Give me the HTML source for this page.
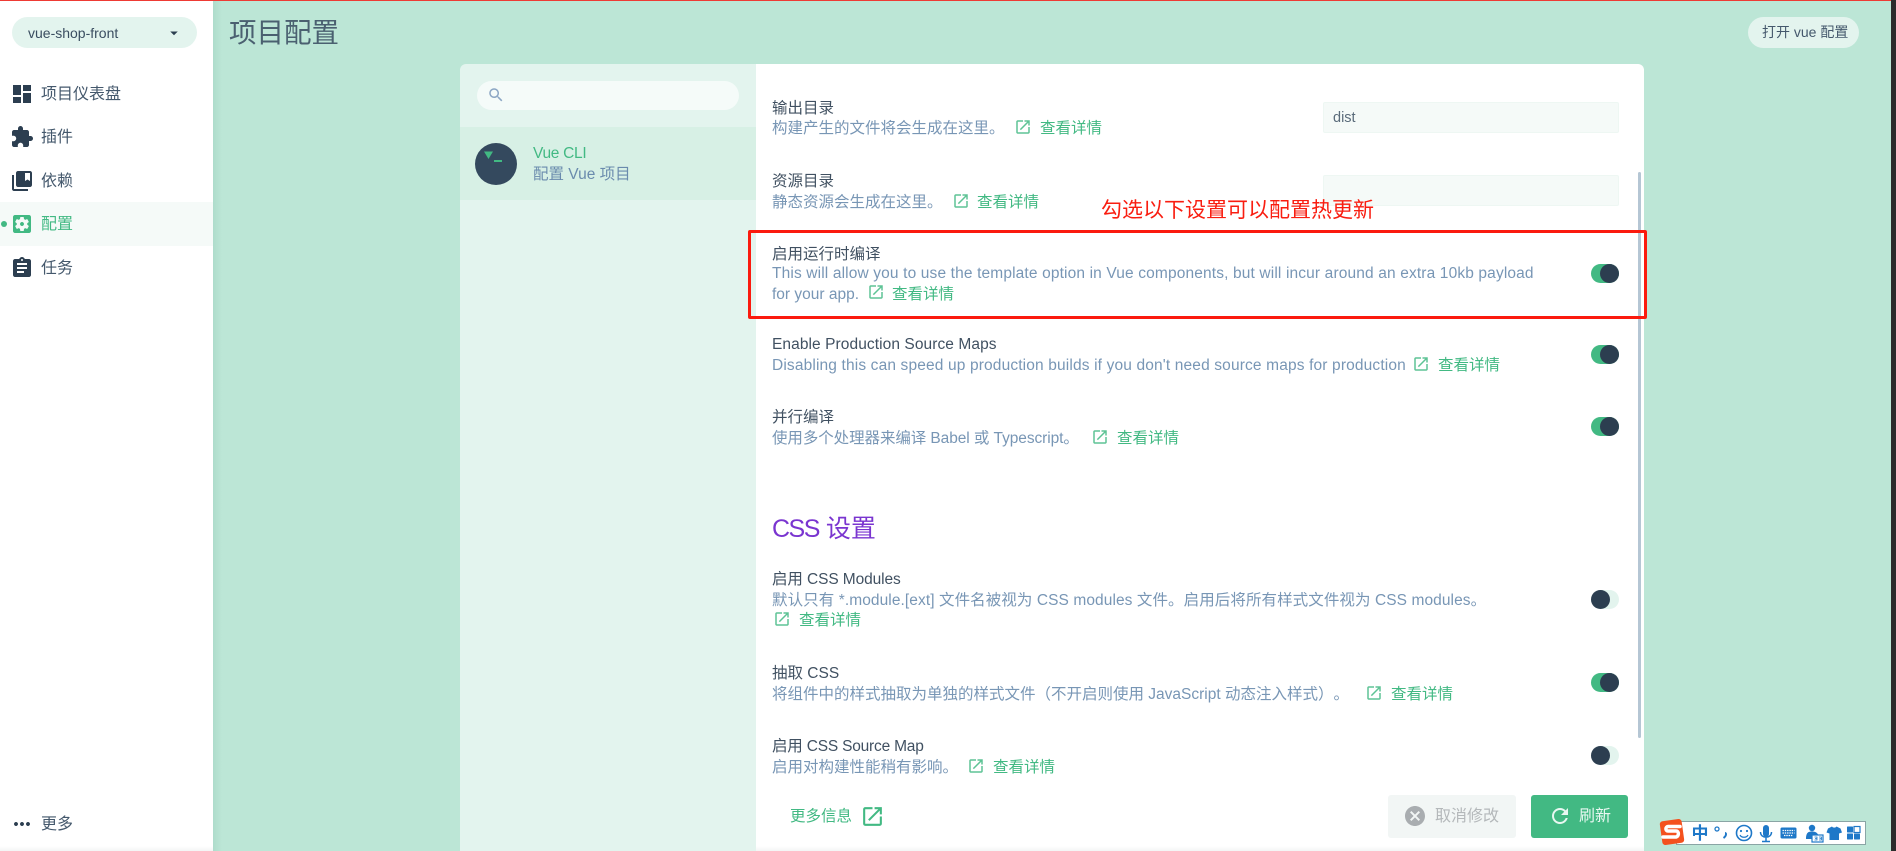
<!DOCTYPE html>
<html lang="zh-CN"><head><meta charset="utf-8"><title>项目配置</title>
<style>
*{box-sizing:border-box}
html,body{margin:0;padding:0;width:1896px;height:851px;overflow:hidden;background:#bce6d6;font-family:"Liberation Sans","Noto Sans CJK SC",sans-serif;font-size:16px;color:#2c3e50}
.a{position:absolute}
.t{position:absolute;white-space:nowrap;line-height:20px;height:20px;margin-top:1px;text-spacing-trim:space-all}
.ti{color:#2c3e50;opacity:.9;font-size:15.5px}
.d{color:#6a8bad;opacity:.9;font-size:15.5px}
.l{color:#42b983;font-size:15.5px}
svg{position:absolute;display:block}
.nav{fill:#2c3e50}
.lk{fill:#42b983;opacity:.85}
.tg{position:absolute;left:1591px;width:28px;height:19px;border-radius:10px;background:#42b983}
.tg i{position:absolute;right:0;top:0;width:19px;height:19px;border-radius:50%;background:#2c3e50}
.tg.off{background:#e3f4ee}
.tg.off i{right:auto;left:0}
.inp{position:absolute;left:1323px;width:296px;height:31px;background:#f5faf8;border:1px solid #eef7f3;border-radius:2px}
</style></head><body>
<div class="a" style="left:0;top:0;width:1896px;height:851px;background:#bce6d6"></div>
<div class="a" style="left:213px;top:0;width:9px;height:851px;background:linear-gradient(90deg,#aedccb,#bce6d6)"></div>

<!-- sidebar -->
<div class="a" style="left:0;top:0;width:213px;height:851px;background:#fff"></div>
<div class="a" style="left:12px;top:17px;width:185px;height:31px;border-radius:16px;background:#e3f4ee"></div>
<div class="t" style="left:28px;top:22px;font-size:14px;color:#3a4d60">vue-shop-front</div>
<svg style="left:165px;top:23.500px" width="18" height="18" viewBox="0 0 24 24" class="nav"><path d="M7 10l5 5 5-5z"/></svg>

<svg class="nav" style="left:10px;top:82px" width="24" height="24" viewBox="0 0 24 24"><path d="M3 13h8V3H3v10zm0 8h8v-6H3v6zm10 0h8V11h-8v10zm0-18v6h8V3h-8z"/></svg>
<div class="t" style="left:41px;top:84px;color:#44586c">项目仪表盘</div>
<svg class="nav" style="left:10px;top:125px" width="24" height="24" viewBox="0 0 24 24"><path d="M20.5 11H19V7c0-1.1-.9-2-2-2h-4V3.5C13 2.12 11.88 1 10.5 1S8 2.12 8 3.5V5H4c-1.1 0-1.99.9-1.99 2v3.8H3.5c1.49 0 2.7 1.21 2.7 2.7s-1.21 2.7-2.7 2.7H2V20c0 1.1.9 2 2 2h3.8v-1.5c0-1.49 1.21-2.7 2.7-2.7 1.49 0 2.7 1.21 2.7 2.7V22H17c1.1 0 2-.9 2-2v-4h1.5c1.38 0 2.5-1.12 2.5-2.5S21.88 11 20.5 11z"/></svg>
<div class="t" style="left:41px;top:127px;color:#44586c">插件</div>
<svg class="nav" style="left:10px;top:169px" width="24" height="24" viewBox="0 0 24 24"><path d="M4 6H2v14c0 1.1.9 2 2 2h14v-2H4V6z"/><path d="M20 2H8c-1.1 0-2 .9-2 2v12c0 1.1.9 2 2 2h12c1.1 0 2-.9 2-2V4c0-1.1-.9-2-2-2zm0 10l-2.5-1.5L15 12V4h5v8z"/></svg>
<div class="t" style="left:41px;top:171px;color:#44586c">依赖</div>
<div class="a" style="left:0;top:202px;width:213px;height:44px;background:#f5faf8"></div>
<div class="a" style="left:1px;top:221px;width:6px;height:6px;border-radius:50%;background:#42b983"></div>
<svg style="left:10px;top:212px;fill:#42b983" width="24" height="24" viewBox="0 0 24 24"><path d="M12 10c-1.1 0-2 .9-2 2s.9 2 2 2 2-.9 2-2-.9-2-2-2zm7-7H5c-1.11 0-2 .9-2 2v14c0 1.1.89 2 2 2h14c1.11 0 2-.9 2-2V5c0-1.1-.89-2-2-2zm-1.75 9c0 .23-.02.46-.05.68l1.48 1.16c.13.11.17.3.08.45l-1.4 2.42c-.09.15-.27.21-.43.15l-1.74-.7c-.36.28-.76.51-1.18.69l-.26 1.85c-.03.17-.18.3-.35.3h-2.8c-.17 0-.32-.13-.35-.29l-.26-1.85c-.43-.18-.82-.41-1.18-.69l-1.74.7c-.16.06-.34 0-.43-.15l-1.4-2.42c-.09-.15-.05-.34.08-.45l1.48-1.16c-.03-.23-.05-.46-.05-.69 0-.23.02-.46.05-.68l-1.48-1.16c-.13-.11-.17-.3-.08-.45l1.4-2.42c.09-.15.27-.21.43-.15l1.74.7c.36-.28.76-.51 1.18-.69l.26-1.85c.03-.17.18-.3.35-.3h2.8c.17 0 .32.13.35.29l.26 1.85c.43.18.82.41 1.18.69l1.74-.7c.16-.06.34 0 .43.15l1.4 2.42c.09.15.05.34-.08.45l-1.48 1.16c.03.23.05.46.05.69z"/></svg>
<div class="t" style="left:41px;top:214px;color:#42b983">配置</div>
<svg class="nav" style="left:10px;top:256px" width="24" height="24" viewBox="0 0 24 24"><path d="M19 3h-4.18C14.4 1.84 13.3 1 12 1c-1.3 0-2.4.84-2.82 2H5c-1.1 0-2 .9-2 2v14c0 1.1.9 2 2 2h14c1.1 0 2-.9 2-2V5c0-1.1-.9-2-2-2zm-7 0c.55 0 1 .45 1 1s-.45 1-1 1-1-.45-1-1 .45-1 1-1zm2 14H7v-2h7v2zm3-4H7v-2h10v2zm0-4H7V7h10v2z"/></svg>
<div class="t" style="left:41px;top:258px;color:#44586c">任务</div>
<svg class="nav" style="left:10px;top:812px" width="24" height="24" viewBox="0 0 24 24"><path d="M6 10c-1.1 0-2 .9-2 2s.9 2 2 2 2-.9 2-2-.9-2-2-2zm12 0c-1.1 0-2 .9-2 2s.9 2 2 2 2-.9 2-2-.9-2-2-2zm-6 0c-1.1 0-2 .9-2 2s.9 2 2 2 2-.9 2-2-.9-2-2-2z"/></svg>
<div class="t" style="left:41px;top:814px;color:#44586c">更多</div>
<div class="a" style="left:0;top:846px;width:213px;height:5px;background:linear-gradient(#fff,#f3f5f5)"></div>

<!-- header -->
<div class="t" style="left:229px;top:14px;height:36px;line-height:36px;font-size:27.5px;color:#4a6070">项目配置</div>
<div class="a" style="left:1748px;top:17px;width:111px;height:31px;border-radius:16px;background:#e3f4ee"></div>
<div class="t" style="left:1762px;top:21px;font-size:14px;color:#44586c">打开 vue 配置</div>

<!-- panel left -->
<div class="a" style="left:460px;top:64px;width:296px;height:787px;background:#e3f4ee;border-radius:6px 0 0 0"></div>
<div class="a" style="left:477px;top:81px;width:262px;height:29px;border-radius:15px;background:#f5fbf9"></div>
<svg style="left:487px;top:86px;fill:#8ca6c4" width="18" height="18" viewBox="0 0 24 24"><path d="M15.5 14h-.79l-.28-.27C15.41 12.59 16 11.11 16 9.5 16 5.91 13.09 3 9.5 3S3 5.91 3 9.5 5.91 16 9.5 16c1.61 0 3.09-.59 4.23-1.57l.27.28v.79l5 4.99L20.49 19l-4.99-5zm-6 0C7.01 14 5 11.99 5 9.5S7.01 5 9.5 5 14 7.01 14 9.5 11.99 14 9.5 14z"/></svg>
<div class="a" style="left:460px;top:127px;width:296px;height:73px;background:#d7f0e5"></div>
<div class="a" style="left:475px;top:143px;width:42px;height:42px;border-radius:50%;background:#34495e"></div>
<svg style="left:475px;top:143px" width="42" height="42" viewBox="0 0 42 42"><path d="M9 8.500h9l-4.500 7.500z" fill="#42b983"/><rect x="19" y="17" width="8" height="2" fill="#42b983"/></svg>
<div class="t" style="left:533px;top:143px;color:#42b983;font-size:15.5px;letter-spacing:-.3px">Vue CLI</div>
<div class="t" style="left:533px;top:164px;color:#6a8bad;font-size:15.5px">配置 Vue 项目</div>

<!-- panel right -->
<div class="a" style="left:756px;top:64px;width:888px;height:787px;background:#fff;border-radius:0 6px 0 0"></div>
<div class="a" style="left:756px;top:846px;width:888px;height:5px;background:linear-gradient(#fff,#f3f5f5)"></div>

<div class="t ti" style="left:772px;top:98px">输出目录</div>
<div class="t d" style="left:772px;top:118px">构建产生的文件将会生成在这里。</div>
<svg class="lk" style="left:1014px;top:118px" width="18" height="18" viewBox="0 0 24 24"><path d="M19 19H5V5h7V3H5c-1.11 0-2 .9-2 2v14c0 1.1.89 2 2 2h14c1.1 0 2-.9 2-2v-7h-2v7zM14 3v2h3.59l-9.830 9.830 1.410 1.410L19 6.410V10h2V3h-7z"/></svg>
<div class="t l" style="left:1040px;top:118px">查看详情</div>
<div class="inp" style="top:102px"></div>
<div class="t" style="left:1333px;top:107px;font-size:14.500px;color:#5a6b7a">dist</div>

<div class="t ti" style="left:772px;top:171px">资源目录</div>
<div class="t d" style="left:772px;top:192px">静态资源会生成在这里。</div>
<svg class="lk" style="left:952px;top:192px" width="18" height="18" viewBox="0 0 24 24"><path d="M19 19H5V5h7V3H5c-1.11 0-2 .9-2 2v14c0 1.1.89 2 2 2h14c1.1 0 2-.9 2-2v-7h-2v7zM14 3v2h3.59l-9.830 9.830 1.410 1.410L19 6.410V10h2V3h-7z"/></svg>
<div class="t l" style="left:977px;top:192px">查看详情</div>
<div class="inp" style="top:175px"></div>

<div class="t ti" style="left:772px;top:244px">启用运行时编译</div>
<div class="t d" style="left:772px;top:263px;letter-spacing:.14px">This will allow you to use the template option in Vue components, but will incur around an extra 10kb payload</div>
<div class="t d" style="left:772px;top:284px">for your app.</div>
<svg class="lk" style="left:867px;top:283px" width="18" height="18" viewBox="0 0 24 24"><path d="M19 19H5V5h7V3H5c-1.11 0-2 .9-2 2v14c0 1.1.89 2 2 2h14c1.1 0 2-.9 2-2v-7h-2v7zM14 3v2h3.59l-9.830 9.830 1.410 1.410L19 6.410V10h2V3h-7z"/></svg>
<div class="t l" style="left:892px;top:284px">查看详情</div>
<div class="tg" style="top:264px"><i></i></div>

<div class="t ti" style="left:772px;top:334px;letter-spacing:.08px">Enable Production Source Maps</div>
<div class="t d" style="left:772px;top:355px;letter-spacing:.146px">Disabling this can speed up production builds if you don't need source maps for production</div>
<svg class="lk" style="left:1412px;top:355px" width="18" height="18" viewBox="0 0 24 24"><path d="M19 19H5V5h7V3H5c-1.11 0-2 .9-2 2v14c0 1.1.89 2 2 2h14c1.1 0 2-.9 2-2v-7h-2v7zM14 3v2h3.59l-9.830 9.830 1.410 1.410L19 6.410V10h2V3h-7z"/></svg>
<div class="t l" style="left:1438px;top:355px">查看详情</div>
<div class="tg" style="top:345px"><i></i></div>

<div class="t ti" style="left:772px;top:407px">并行编译</div>
<div class="t d" style="left:772px;top:428px;letter-spacing:-.08px">使用多个处理器来编译 Babel 或 Typescript。</div>
<svg class="lk" style="left:1091px;top:428px" width="18" height="18" viewBox="0 0 24 24"><path d="M19 19H5V5h7V3H5c-1.11 0-2 .9-2 2v14c0 1.1.89 2 2 2h14c1.1 0 2-.9 2-2v-7h-2v7zM14 3v2h3.59l-9.830 9.830 1.410 1.410L19 6.410V10h2V3h-7z"/></svg>
<div class="t l" style="left:1117px;top:428px">查看详情</div>
<div class="tg" style="top:417px"><i></i></div>

<div class="t" style="left:772px;top:510px;height:36px;line-height:36px;font-size:25px;color:#7a35d0"><span style="letter-spacing:-1.5px">CSS</span> 设置</div>

<div class="t ti" style="left:772px;top:569px;letter-spacing:-.1px">启用 CSS Modules</div>
<div class="t d" style="left:772px;top:590px;letter-spacing:.08px">默认只有 *.module.[ext] 文件名被视为 CSS modules 文件。启用后将所有样式文件视为 CSS modules。</div>
<svg class="lk" style="left:773px;top:610px" width="18" height="18" viewBox="0 0 24 24"><path d="M19 19H5V5h7V3H5c-1.11 0-2 .9-2 2v14c0 1.1.89 2 2 2h14c1.1 0 2-.9 2-2v-7h-2v7zM14 3v2h3.59l-9.830 9.830 1.410 1.410L19 6.410V10h2V3h-7z"/></svg>
<div class="t l" style="left:799px;top:610px">查看详情</div>
<div class="tg off" style="top:590px"><i></i></div>

<div class="t ti" style="left:772px;top:663px">抽取 CSS</div>
<div class="t d" style="left:772px;top:684px">将组件中的样式抽取为单独的样式文件（不开启则使用 JavaScript 动态注入样式）。</div>
<svg class="lk" style="left:1365px;top:684px" width="18" height="18" viewBox="0 0 24 24"><path d="M19 19H5V5h7V3H5c-1.11 0-2 .9-2 2v14c0 1.1.89 2 2 2h14c1.1 0 2-.9 2-2v-7h-2v7zM14 3v2h3.59l-9.830 9.830 1.410 1.410L19 6.410V10h2V3h-7z"/></svg>
<div class="t l" style="left:1391px;top:684px">查看详情</div>
<div class="tg" style="top:673px"><i></i></div>

<div class="t ti" style="left:772px;top:736px;letter-spacing:-.2px">启用 CSS Source Map</div>
<div class="t d" style="left:772px;top:757px">启用对构建性能稍有影响。</div>
<svg class="lk" style="left:967px;top:757px" width="18" height="18" viewBox="0 0 24 24"><path d="M19 19H5V5h7V3H5c-1.11 0-2 .9-2 2v14c0 1.1.89 2 2 2h14c1.1 0 2-.9 2-2v-7h-2v7zM14 3v2h3.59l-9.830 9.830 1.410 1.410L19 6.410V10h2V3h-7z"/></svg>
<div class="t l" style="left:993px;top:757px">查看详情</div>
<div class="tg off" style="top:746px"><i></i></div>

<!-- scrollbar -->
<div class="a" style="left:1638px;top:172px;width:3px;height:566px;border-radius:2px;background:#b5c6d4"></div>

<!-- footer -->
<div class="t l" style="left:790px;top:806px;font-size:15.500px">更多信息</div>
<svg style="left:860px;top:804px;fill:#42b983" width="25" height="25" viewBox="0 0 24 24"><path d="M19 19H5V5h7V3H5c-1.11 0-2 .9-2 2v14c0 1.1.89 2 2 2h14c1.1 0 2-.9 2-2v-7h-2v7zM14 3v2h3.59l-9.830 9.830 1.410 1.410L19 6.410V10h2V3h-7z"/></svg>
<div class="a" style="left:1388px;top:795px;width:128px;height:43px;border-radius:3px;background:#f2f6f5"></div>
<svg style="left:1403px;top:804px;fill:#a9adb0" width="24" height="24" viewBox="0 0 24 24"><path d="M12 2C6.470 2 2 6.470 2 12s4.470 10 10 10 10-4.470 10-10S17.530 2 12 2zm5 13.590L15.590 17 12 13.410 8.410 17 7 15.590 10.590 12 7 8.410 8.410 7 12 10.590 15.590 7 17 8.410 13.410 12 17 15.590z"/></svg>
<div class="t" style="left:1435px;top:806px;color:#b4b8ba">取消修改</div>
<div class="a" style="left:1531px;top:795px;width:97px;height:43px;border-radius:3px;background:#42b983"></div>
<svg style="left:1548px;top:804px;fill:#e8f7f1" width="24" height="24" viewBox="0 0 24 24"><path d="M17.650 6.350C16.200 4.900 14.210 4 12 4c-4.420 0-7.990 3.580-7.990 8s3.570 8 7.990 8c3.730 0 6.840-2.550 7.730-6h-2.080c-.82 2.330-3.040 4-5.650 4-3.310 0-6-2.690-6-6s2.690-6 6-6c1.660 0 3.140.69 4.220 1.780L13 11h7V4l-2.350 2.350z"/></svg>
<div class="t" style="left:1579px;top:806px;color:#e8f7f1">刷新</div>

<!-- annotation -->
<div class="a" style="left:748px;top:230px;width:899px;height:89px;border:3px solid #fb1a0e;border-radius:2px"></div>
<div class="t" style="left:1101px;top:195px;height:30px;line-height:30px;font-size:21px;color:#f91d10">勾选以下设置可以配置热更新</div>

<!-- sogou ime -->
<div class="a" style="left:1676px;top:821px;width:190px;height:24px;background:#fff;border:1px solid #8aa5a5"></div>
<svg style="left:1655px;top:812px" width="215" height="39" viewBox="0 0 215 39">
<rect x="6" y="8" width="22" height="24" rx="3" fill="#f4511e" transform="rotate(-8 17 20)"/>
<path d="M25 14.500H13c-2.500 0-3 4.500 0 4.500h8c3.500 0 3 6-.5 6H8" fill="none" stroke="#fff" stroke-width="3.500" stroke-linecap="round"/>
<text x="45" y="27" font-size="17" font-weight="700" fill="#1e78c8" text-anchor="middle" font-family="Noto Sans CJK SC">中</text>
<circle cx="62" cy="17" r="2" fill="none" stroke="#1e78c8" stroke-width="1.300"/>
<path d="M70 21c1.500 0 1.500 3-1.500 5" fill="none" stroke="#1e78c8" stroke-width="2"/>
<circle cx="89" cy="21" r="7.500" fill="none" stroke="#1e78c8" stroke-width="1.600"/>
<circle cx="86" cy="19" r="1.100" fill="#1e78c8"/><circle cx="92" cy="19" r="1.100" fill="#1e78c8"/>
<path d="M85 23c1.500 3 6.500 3 8 0" fill="none" stroke="#1e78c8" stroke-width="1.300"/>
<rect x="108" y="13" width="6" height="12" rx="3" fill="#1e78c8"/>
<path d="M105.500 20c0 7 11 7 11 0M111 26v3M107 29.500h8" fill="none" stroke="#1e78c8" stroke-width="1.500"/>
<rect x="125.500" y="15.500" width="16" height="11" rx="1.500" fill="#1e78c8"/>
<path d="M127.500 18.500h12M127.500 21h12M129 23.500h9" stroke="#fff" stroke-width="1.200" stroke-dasharray="1.400 .9"/>
<circle cx="157" cy="16" r="3.200" fill="#1e78c8"/>
<path d="M151 27c0-7 3-7.500 6-7.500s5 1 6 3l-5 0v4.500z" fill="#1e78c8"/>
<rect x="157" y="23" width="11" height="7" fill="#fff" stroke="#1e78c8" stroke-width="1.200"/>
<path d="M159.500 25h2.500v3h-2.500M164 25h2.500v3H164M162 26.500h-2M166.500 26.500h-2" fill="none" stroke="#1e78c8" stroke-width=".8"/>
<path d="M173 16.500l4-2c1 1.500 3.500 1.500 4.500 0l4 2 1.500 4-3 1v6.500h-9.500v-6.500l-3-1z" fill="#1e78c8"/>
<rect x="192" y="14.500" width="6" height="6" rx=".6" fill="#1e78c8"/><rect x="199" y="14.500" width="6" height="6" fill="none" stroke="#1e78c8" stroke-width="1.200"/>
<rect x="192" y="21.500" width="6" height="6" rx=".6" fill="#1e78c8"/><rect x="199" y="21.500" width="6" height="6" rx=".6" fill="#1e78c8"/>
</svg>

<!-- window edges -->
<div class="a" style="left:0;top:0;width:1891px;height:1px;background:#ee3a34"></div>
<div class="a" style="left:1891px;top:0;width:5px;height:851px;background:#2b2b2b"></div>
</body></html>
